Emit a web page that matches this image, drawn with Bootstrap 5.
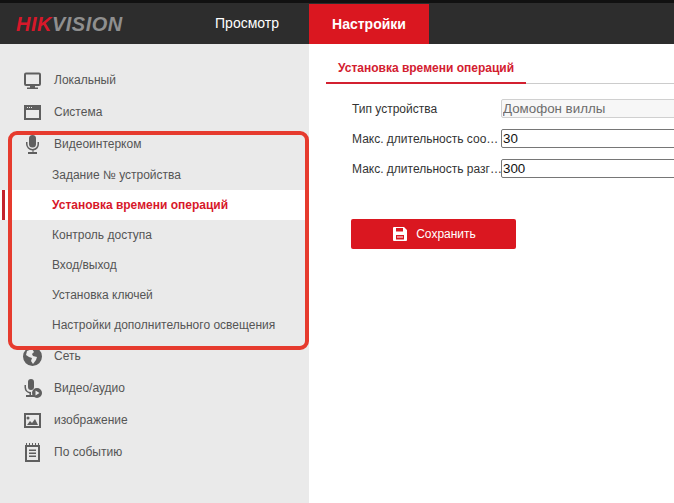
<!DOCTYPE html>
<html lang="ru"><head><meta charset="utf-8"><title>Hikvision</title>
<link href="https://cdn.jsdelivr.net/npm/bootstrap@5.3.0/dist/css/bootstrap.min.css" rel="stylesheet">
<style>
html,body{height:100%;overflow:hidden}
body{width:674px;height:503px;font-family:"Liberation Sans",Arial,sans-serif;font-size:12px;color:#4d4d4d;background:#fff;position:relative}
.topstrip{height:3px;background:#111}
.hdr{height:41px;background:#2d2d2d}
.brand{width:199px;padding-left:16px;font-weight:700;font-style:italic;font-size:20px;letter-spacing:.5px;line-height:43px;white-space:nowrap}
.brand b{color:#d7182a;font-weight:700}.brand span{color:#8f8f8f;font-weight:700}
.tabv{width:110px;padding-right:14px;text-align:center;color:#fff;font-size:14px;line-height:41px}
.tabs{width:120px;margin-top:1px;text-align:center;color:#fff;font-size:14px;font-weight:700;line-height:40px;background:#da1720}
.wrap{height:459px}
.side{width:309px;background:#eaeaea;padding-top:20px;flex:none}
.itm{height:32px;padding-left:23px;gap:12px;color:#555}
.itm svg{width:19px;height:19px;flex:none;fill:#5f5f5f}
.sub{height:30px;padding-left:52px;line-height:30px;color:#555}
.sub.on{background:#fff;color:#d7182a;font-weight:700;position:relative}
.sub.on::before{content:"";position:absolute;left:2px;top:0;width:3px;height:100%;background:#c4232e}
.mainp{flex:1;min-width:0;padding:16px 0 0 17px;overflow:hidden}
.tabline2{height:24px;border-bottom:1px solid #ccc}
.tt{width:200px;height:24px;padding-left:12px;color:#d32030;font-weight:700;font-size:12px;line-height:16px;border-bottom:2px solid #d32030;white-space:nowrap}
.frm{padding-left:25px;padding-top:15px}
.frow{height:19px;margin-bottom:11px}
.lbl{width:150px;flex:none;padding:1px 0 0 1px;color:#333;white-space:nowrap;line-height:19px}
.inp{width:260px;height:19px;flex:none;font-size:13.33px;line-height:16px;padding:0 1px;border:1px solid #767676;border-radius:2px;color:#111;font-family:inherit;background:#fff;margin-right:-100px}
.inp:disabled{background:#f7f7f7;border-color:#d0d0d0;color:#6d6d6d}
.savebtn{width:165px;height:30px;background:#da1720;border:0;border-radius:2px;color:#fff;font-size:12px;margin-top:41px;gap:9px;padding:0 0 0 2px}
.savebtn svg{width:14px;height:14px;fill:#fff}
.callout{position:absolute;left:8px;top:131px;width:301px;height:219px;border:4px solid #e63b2e;border-radius:9px;pointer-events:none}
</style></head>
<body>
<div class="topstrip"></div>
<header class="hdr d-flex">
 <div class="brand"><b>HIK</b><span>VISION</span></div>
 <div class="tabv">Просмотр</div>
 <div class="tabs">Настройки</div>
</header>
<div class="wrap d-flex">
 <aside class="side">
  <div class="itm d-flex align-items-center"><svg viewBox="0 0 19 19"><path fill-rule="evenodd" d="M3 1.500h13a2 2 0 0 1 2 2V13a2 2 0 0 1-2 2h-4v1.500h3V18H4v-1.500h3V15H3a2 2 0 0 1-2-2V3.500a2 2 0 0 1 2-2zm0 2V13h13V3.500z"/></svg><span>Локальный</span></div>
  <div class="itm d-flex align-items-center"><svg viewBox="0 0 19 19"><path fill-rule="evenodd" d="M1 2h17v15H1zm2 5v8h13V7zm1-3v1h1V4zm2 0v1h1V4zm2 0v1h1V4z"/></svg><span>Система</span></div>
  <div class="itm d-flex align-items-center"><svg viewBox="0 0 19 19"><path d="M9.500 0a3.500 3.500 0 0 1 3.500 3.500V9a3.500 3.500 0 0 1-7 0V3.500A3.500 3.500 0 0 1 9.500 0z"/><path d="M3 7h1.500v2a5 5 0 0 0 10 0V7H16v2a6.500 6.500 0 0 1-5.500 6.400V17H14v2H5v-2h4.500v-1.600A6.500 6.500 0 0 1 3 9z"/></svg><span>Видеоинтерком</span></div>
  <div class="subs">
   <div class="sub">Задание № устройства</div>
   <div class="sub on">Установка времени операций</div>
   <div class="sub">Контроль доступа</div>
   <div class="sub">Вход/выход</div>
   <div class="sub">Установка ключей</div>
   <div class="sub">Настройки дополнительного освещения</div>
  </div>
  <div class="itm d-flex align-items-center"><svg viewBox="0 0 19 19"><path fill-rule="evenodd" d="M9.500 0a9.500 9.500 0 1 1 0 19 9.500 9.500 0 0 1 0-19zM4 4 3 8l3 2 3 1-1 3 2 3 3-4 1-3-4-1-1-2 2-2-2-3z"/></svg><span>Сеть</span></div>
  <div class="itm d-flex align-items-center"><svg viewBox="0 0 19 19"><path d="M8 0a3 3 0 0 1 3 3v5a3 3 0 0 1-6 0V3a3 3 0 0 1 3-3zM1.500 6H3v2.500A5 5 0 0 0 8 13v3H11v2H3v-2h3.500v-1.600A6.500 6.500 0 0 1 1.500 8.500z"/><path fill-rule="evenodd" d="M14 9a5 5 0 1 1 0 10 5 5 0 0 1 0-10zm-1.500 2.500v5l4-2.500z"/></svg><span>Видео/аудио</span></div>
  <div class="itm d-flex align-items-center"><svg viewBox="0 0 19 19"><path fill-rule="evenodd" d="M1 2h17v15H1zm2 2v11h13V4zm2 1.500a1.500 1.500 0 1 1 0 3 1.500 1.500 0 0 1 0-3zM4 14l3-4 2 2 3-4 3 6z"/></svg><span>изображение</span></div>
  <div class="itm d-flex align-items-center"><svg viewBox="0 0 19 19"><path fill-rule="evenodd" d="M2 2h1V0h1v2h2V0h1v2h2V0h1v2h2V0h1v2h2V0h1v2h1v17H2zm2 2v13h11V4zm2 2.500h7V8H6zm0 3h7V11H6zm0 3h7V14H6z"/></svg><span>По событию</span></div>
 </aside>
 <main class="mainp">
  <div class="tabline2 d-flex"><div class="tt">Установка времени операций</div></div>
  <div class="frm">
   <div class="frow d-flex align-items-center"><div class="lbl">Тип устройства</div><input class="inp" disabled value="Домофон виллы"></div>
   <div class="frow d-flex align-items-center"><div class="lbl">Макс. длительность соо…</div><input class="inp" value="30"></div>
   <div class="frow d-flex align-items-center"><div class="lbl">Макс. длительность разг…</div><input class="inp" value="300"></div>
   <button class="savebtn d-flex align-items-center justify-content-center" type="button"><svg viewBox="0 0 14 14"><path fill-rule="evenodd" d="M1 0h10l3 3v10a1 1 0 0 1-1 1H1a1 1 0 0 1-1-1V1a1 1 0 0 1 1-1zm2 1v3.500h7V1zm0 7v4.500h8V8z"/><path d="M4 9.500h6v1H4z"/></svg><span>Сохранить</span></button>
  </div>
 </main>
</div>
<div class="callout"></div>
<script src="https://cdn.jsdelivr.net/npm/bootstrap@5.3.0/dist/js/bootstrap.bundle.min.js"></script>
</body></html>
